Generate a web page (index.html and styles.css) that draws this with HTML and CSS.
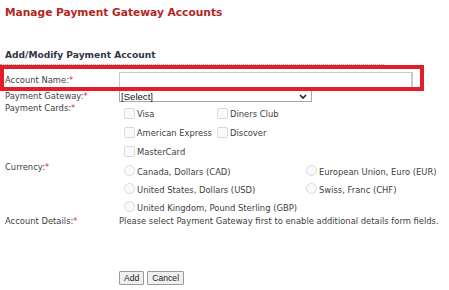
FILE: index.html
```html
<!DOCTYPE html>
<html lang="en">
<head>
    <meta charset="UTF-8">
    <title>Manage Payment Gateway Accounts</title>
    <link rel="stylesheet" href="styles.css">
</head>
<body>
  <h1 class="title">Manage Payment Gateway Accounts</h1>

  <h2 class="subtitle">Add/Modify Payment Account</h2>

  <form class="account-form">
    <div class="row row-name">
      <label class="field-label">Account Name:<span class="req">*</span></label>
      <div class="field"><input type="text" class="text-input"></div>
    </div>

    <div class="row row-gateway">
      <label class="field-label">Payment Gateway:<span class="req">*</span></label>
      <div class="field">
        <div class="select-box">
          <span>[Select]</span>
          <svg class="chevron" width="8" height="5" viewBox="0 0 8 5"><path d="M1 1 L4 4 L7 1" fill="none" stroke="#222" stroke-width="1.6"/></svg>
        </div>
      </div>
    </div>

    <div class="row row-group">
      <label class="field-label">Payment Cards:<span class="req">*</span></label>
      <div class="field options cards">
        <label class="opt"><span class="box"></span>Visa</label>
        <label class="opt"><span class="box"></span>Diners Club</label>
        <label class="opt"><span class="box"></span>American Express</label>
        <label class="opt"><span class="box"></span>Discover</label>
        <label class="opt"><span class="box"></span>MasterCard</label>
      </div>
    </div>

    <div class="row row-group">
      <label class="field-label">Currency:<span class="req">*</span></label>
      <div class="field options currency">
        <label class="opt"><span class="box round"></span>Canada, Dollars (CAD)</label>
        <label class="opt"><span class="box round"></span>European Union, Euro (EUR)</label>
        <label class="opt"><span class="box round"></span>United States, Dollars (USD)</label>
        <label class="opt"><span class="box round"></span>Swiss, Franc (CHF)</label>
        <label class="opt"><span class="box round"></span>United Kingdom, Pound Sterling (GBP)</label>
      </div>
    </div>

    <div class="row row-details">
      <label class="field-label">Account Details:<span class="req">*</span></label>
      <div class="field">Please select Payment Gateway first to enable additional details form fields.</div>
    </div>

    <div class="row row-buttons">
      <span></span>
      <div class="field buttons">
        <button type="button" class="btn">Add</button>
        <button type="button" class="btn">Cancel</button>
      </div>
    </div>
  </form>
</body>
</html>
```

FILE: styles.css
```css
* {
   box-sizing: border-box;
}

body {
   margin: 0;
   font-family: "DejaVu Sans", Verdana, sans-serif;
   font-size: 8.4px;
   color: #404040;
   background: #fff;
}

.title {
   margin: 0;
   padding: 6px 5px 0;
   font-size: 10.65px;
   line-height: 13px;
   color: #b3261e;
}

.subtitle {
   margin: 31px 0 0;
   padding: 0 5px 3px;
   width: 384px;
   font-size: 9.1px;
   line-height: 11px;
   color: #2e3744;
   border-bottom: 1px dotted #aaa;
}

.row {
   display: grid;
   grid-template-columns: 119px 1fr;
}

.field-label {
   padding-left: 5px;
   line-height: 9px;
}

.req {
   color: #e2281f;
}

.row-name {
   width: 424px;
   height: 26px;
   padding-top: 5px;
   align-items: center;
   outline: 4px solid #e51d2a;
   outline-offset: -4px;
}

.row-name .field-label {
   align-self: center;
   margin-top: -1px;
}

.text-input {
   display: block;
   width: 294px;
   height: 17px;
   border: 1px solid #c9c9c9;
   border-right-width: 2px;
   border-bottom-width: 2px;
   background: #fff;
}

.row-gateway {
   height: 11px;
   align-items: center;
}

.select-box {
   width: 193px;
   height: 11px;
   border: 1px solid #a8a8a8;
   border-top: none;
   display: flex;
   align-items: center;
   justify-content: space-between;
   padding: 0 4px 0 1px;
   font-family: "Liberation Sans", Arial, sans-serif;
   font-size: 9.6px;
   color: #111;
}

.row-group .field-label,
.row-details .field-label {
   padding-top: 2px;
}

.options {
   display: grid;
}

.cards {
   grid-template-columns: 93px auto;
   grid-auto-rows: 19px;
   padding-top: 2px;
}

.currency {
   grid-template-columns: 182px auto;
   grid-auto-rows: 18px;
   padding-top: 0;
}

.opt {
   display: flex;
   align-items: center;
   padding-left: 5px;
   white-space: nowrap;
}

.box {
   width: 11px;
   height: 11px;
   margin-right: 2px;
   border: 1px solid #dadada;
   border-radius: 2px;
   background: #fafafa;
}

.box.round {
   border-radius: 50%;
   margin-top: -3px;
}

.currency .opt {
   padding-top: 3px;
}

.row-details {
   margin-top: 0;
   line-height: 9px;
}

.row-details .field {
   padding-top: 2px;
}

.row-buttons {
   margin-top: 45px;
}

.buttons {
   display: flex;
   gap: 3px;
}

.btn {
   height: 14px;
   padding: 0 4px;
   font-family: "Liberation Sans", Arial, sans-serif;
   font-size: 8.6px;
   color: #222;
   background: #f0f0f0;
   border: 1px solid #9a9a9a;
   border-radius: 1px;
}
```
